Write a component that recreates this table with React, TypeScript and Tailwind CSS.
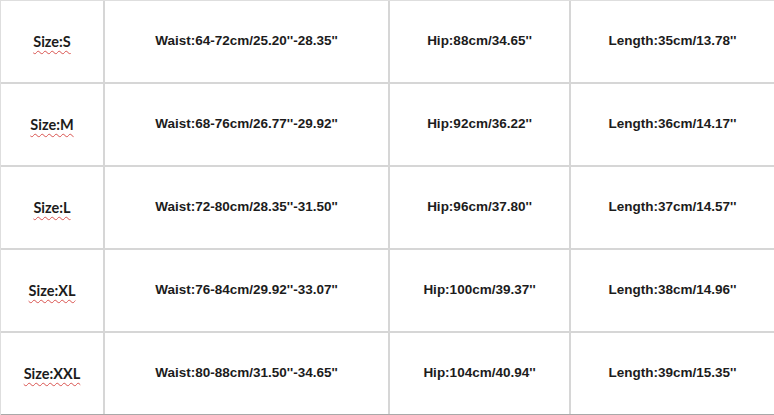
const rows = [
  ["Size:S", "Waist:64-72cm/25.20''-28.35''", "Hip:88cm/34.65''", "Length:35cm/13.78''"],
  ["Size:M", "Waist:68-76cm/26.77''-29.92''", "Hip:92cm/36.22''", "Length:36cm/14.17''"],
  ["Size:L", "Waist:72-80cm/28.35''-31.50''", "Hip:96cm/37.80''", "Length:37cm/14.57''"],
  ["Size:XL", "Waist:76-84cm/29.92''-33.07''", "Hip:100cm/39.37''", "Length:38cm/14.96''"],
  ["Size:XXL", "Waist:80-88cm/31.50''-34.65''", "Hip:104cm/40.94''", "Length:39cm/15.35''"],
];

export default function App() {
  return (
    <div className="w-[774px] h-[415px] overflow-hidden bg-white border-t border-l border-[#dedede] text-[#1c1c1c]">
      {rows.map((r, i) => (
        <div
          key={r[0]}
          className={`grid grid-cols-[104px_285px_181px_1fr] h-[83px] border-b-2 ${
            i === rows.length - 1 ? "border-[#a9a9a9]" : "border-[#d6d6d6]"
          }`}
        >
          <div className="flex items-center justify-center border-r-2 border-[#d6d6d6]">
            <span
              className="font-bold text-[14.5px] underline decoration-wavy decoration-[#d9534f] decoration-1 underline-offset-[3px]"
              style={{ fontFamily: "Lato, 'Open Sans', sans-serif" }}
            >
              {r[0]}
            </span>
          </div>
          {r.slice(1).map((t, j) => (
            <div
              key={t}
              className={`flex items-center justify-center font-bold text-[13.5px] font-['Liberation_Sans',Arial,sans-serif] ${
                j < 2 ? "border-r-2 border-[#d6d6d6]" : ""
              }`}
            >
              {t}
            </div>
          ))}
        </div>
      ))}
    </div>
  );
}
